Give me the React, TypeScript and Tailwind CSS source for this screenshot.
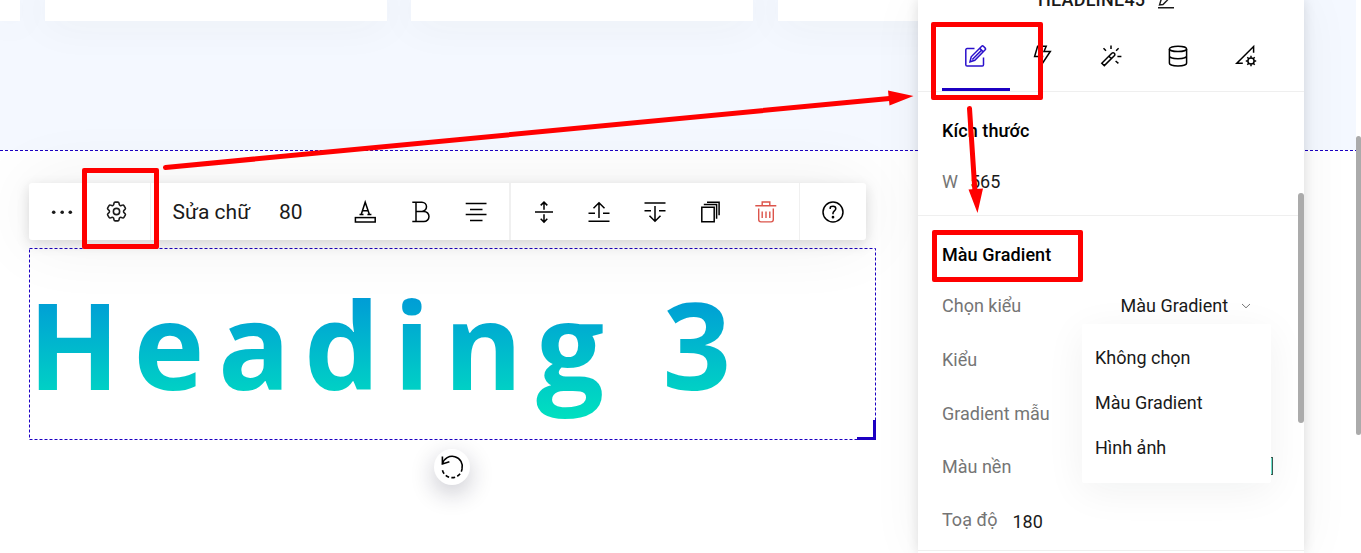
import type { ReactNode } from "react";
import { HiOutlineCog6Tooth } from "react-icons/hi2";

function Icon({ children, className = "", width = 1.5 }: { children: ReactNode; className?: string; width?: number }) {
  return (
    <svg
      viewBox="0 0 24 24"
      className={"h-6 w-6 shrink-0 overflow-visible " + className}
      fill="none"
      stroke="currentColor"
      strokeWidth={width}
    >
      {children}
    </svg>
  );
}

function Cards() {
  return (
    <div className="flex h-[21px] w-[1361px] overflow-visible">
      <div className="h-full w-5 shrink-0 bg-white shadow-[0_0_45px_rgba(60,60,20,0.07)]" />
      <div className="ml-[25px] h-full w-[342px] shrink-0 bg-white shadow-[0_0_45px_rgba(60,60,20,0.07)]" />
      <div className="ml-6 h-full w-[342px] shrink-0 bg-white shadow-[0_0_45px_rgba(60,60,20,0.07)]" />
      <div className="ml-[25px] h-full w-[342px] shrink-0 bg-white shadow-[0_0_45px_rgba(60,60,20,0.07)]" />
    </div>
  );
}

function Toolbar() {
  return (
    <div className="absolute left-[29px] top-[183px] flex h-[57px] w-[837px] items-center rounded-[3px] bg-white text-[21px] text-[#1a1a1a] shadow-[0_4px_14px_rgba(0,0,0,0.14),0_0_70px_rgba(0,0,0,0.07)]">
      <Icon className="ml-[21px]">
        <g fill="currentColor" stroke="none">
          <circle cx="3.7" cy="12.2" r="1.8" />
          <circle cx="12.2" cy="12.2" r="1.8" />
          <circle cx="20.3" cy="12.2" r="1.8" />
        </g>
      </Icon>
      <HiOutlineCog6Tooth className="ml-[30px] h-[25px] w-[25px] shrink-0" strokeWidth={1.5} />
      <div className="ml-[21px] h-full w-px shrink-0 bg-[#f0f0f0]" />
      <span className="ml-[21.5px] w-[106.5px] shrink-0 pt-[2px] whitespace-nowrap">Sửa chữ</span>
      <span className="w-[74px] shrink-0 pt-[2px]">80</span>
      <Icon className="text-black">
        <path d="M8.2 14.5 12.2 2.2 16.4 14.5M6.5 14.5h4M14.4 14.5h4M9.6 10.8h5.4" />
        <rect x="2.4" y="17.6" width="19.8" height="4.4" />
      </Icon>
      <Icon className="ml-8 text-black">
        <path d="M3.3 2.2h9.6a4.6 4.6 0 0 1 0 9.2H7M12.9 11.4h2a5.1 5.1 0 0 1 0 10.2H3.3M7 2.2v19.4" />
      </Icon>
      <Icon className="ml-[31px] text-black">
        <path d="M1.7 3.6h20.8M6 9.4h12.5M1.7 14.5h20.8M6 20.4h12.5" />
      </Icon>
      <div className="ml-[21px] h-full w-0.5 shrink-0 bg-[#f0f0f0]" />
      <Icon className="ml-[21px] text-black">
        <path d="M3 12.1h18M12 2.3v7.5M8.7 5.4 12 2.1l3.3 3.3M12 14.3v7.6M8.7 18.8l3.3 3.3 3.3-3.3" />
      </Icon>
      <Icon className="ml-[31px] text-black">
        <path d="M1.5 21.2h21M1.5 13.3H8M16 13.3h6.5M12 18V2.7M6.5 8.3 12 2.8l5.5 5.5" />
      </Icon>
      <Icon className="ml-8 text-black">
        <path d="M1.5 3h21M1.5 10.8H8M16 10.8h6.5M12 6v15.2M6.5 15.8l5.5 5.5 5.5-5.5" />
      </Icon>
      <Icon className="ml-[31px] text-black">
        <path d="M3.8 7.2h12.4v14.6H3.8zM5.8 4.6h12.8v14.2M9 2.2h12.1v13.1" />
      </Icon>
      <Icon className="ml-8 text-[#dc544b]" width={1.4}>
        <path d="M1.3 5.7h21M8.2 5.5V2h7.6v3.5M4.7 8.4v11.2c0 1.5.8 2.3 2.2 2.3h10.2c1.4 0 2.2-.8 2.2-2.3V8.4M8.2 11.5v6.6M12 11.5v6.6M15.8 11.5v6.6" />
      </Icon>
      <div className="ml-[21px] h-full w-px shrink-0 bg-[#f0f0f0]" />
      <Icon className="ml-[21px] text-black">
        <circle cx="12" cy="12" r="10" />
        <path d="M9.2 9.1V7.8c0-1 1.1-1.6 2.8-1.6s2.8 1 2.8 2.5c0 2-2.8 2.4-2.8 4.4v1.2" />
        <circle cx="12" cy="17.2" r=".6" fill="currentColor" />
      </Icon>
    </div>
  );
}

function Heading() {
  return (
    <div className="relative mt-[97px] ml-[29px] h-[192px] w-[847px]">
      <h3 className="-ml-px bg-[linear-gradient(180deg,#0081df_0%,#00ecbc_100%)] bg-clip-text font-['Open_Sans',sans-serif] text-[120px] leading-[192px] font-bold tracking-[13.6px] whitespace-nowrap text-transparent">
        Heading 3
      </h3>
      <svg className="absolute inset-0 h-full w-full" fill="none" stroke="#1c00c2">
        <rect x=".5" y=".5" width="846" height="191" strokeDasharray="3 2" />
      </svg>
      <div className="absolute right-0 bottom-0 h-5 w-[19px] border-r-[3px] border-b-[3px] border-[#1c00c2]" />
      <div className="absolute top-[201px] left-[405px] flex h-9 w-9 items-center justify-center rounded-full bg-white text-black shadow-[0_8px_24px_rgba(20,20,50,0.24)]">
        <Icon width={1.6}>
          <path d="M2.5 8.8A10 10 0 0 1 22 14" />
          <path d="M22 14A10 10 0 0 1 2.1 13" strokeDasharray="3.8 2.3" strokeDashoffset="1" />
          <path d="M2.4 1.5v7.4l7-2.2" />
        </Icon>
      </div>
    </div>
  );
}

function Tabs() {
  return (
    <div className="flex h-[83px] shrink-0 items-end border-b border-[#efefef] pl-6 text-black">
      <div className="flex h-[74px] w-[68px] border-b-[3px] border-[#1c00c2] pt-[27px] pl-[21px] text-[#2a10cc]">
        <Icon>
          <path d="M11.5 4.6H4.1c-.8 0-1.3.5-1.3 1.3v14.8c0 .8.5 1.3 1.3 1.3h15.2c.8 0 1.2-.5 1.2-1.3v-7.1" />
          <path d="m7 17.8 1.2-5L18.7 2.3c.5-.5 1.2-.5 1.7 0l1.8 1.8c.5.5.5 1.2 0 1.7L11.8 16.3zM16.8 4.4l3.4 3.4M18.7 6.1l-9.4 9.4" />
        </Icon>
      </div>
      <div className="flex h-[74px] w-[67px] pt-[27px] pl-[21px]">
        <Icon>
          <path d="M6.6 2.2h8.6L13 7.4h6.3L10 21.5l1.5-9H3.6z" />
        </Icon>
      </div>
      <div className="flex h-[74px] w-[68px] justify-center pt-[27px]">
        <Icon>
          <path d="M2.8 19.3l10-10c1.7-1.6 4.2.8 2.5 2.5l-10 9.8zM9.9 12.2l2.5 2.5M12 1.5v3.6M4.5 4.3 7 6.8M19.6 4.3l-2.500 2.500M18.400 12.400h4M16.600 17l2.800 2.400" />
        </Icon>
      </div>
      <div className="flex h-[74px] w-[67px] pt-[27px] pl-[21px]">
        <Icon>
          <ellipse cx="12" cy="4.9" rx="8.6" ry="2.7" />
          <path d="M3.4 4.9v14.4c0 1.5 3.8 2.7 8.6 2.7s8.6-1.2 8.6-2.7V4.9M3.4 12c0 1.5 3.8 2.7 8.6 2.7s8.6-1.2 8.6-2.7" />
        </Icon>
      </div>
      <div className="flex h-[74px] w-[68px] justify-center pt-[27px]">
        <Icon>
          <path d="M19.6 8.8V2.5L2.8 19.2h6" />
          <circle cx="17" cy="17" r="3.1" />
          <path d="M17 13.8v-2M17 22.2v-2M13.8 17h-2M22.2 17h-2M14.8 14.8l-1.5-1.5M20.7 20.7l-1.5-1.5M14.8 19.2l-1.5 1.5M20.7 13.3l-1.5 1.5" />
        </Icon>
      </div>
    </div>
  );
}

function Dropdown() {
  return (
    <div className="absolute top-[324px] left-[164px] flex h-[159px] w-[189px] flex-col rounded-[2px] bg-white pt-[11px] pl-[13px] text-[#1a1a1a] shadow-[0_8px_40px_rgba(0,40,30,0.06)]">
      <div className="flex h-[45px] items-center">Không chọn</div>
      <div className="flex h-[45px] items-center">Màu Gradient</div>
      <div className="flex h-[45px] items-center">Hình ảnh</div>
    </div>
  );
}

function Panel() {
  return (
    <aside className="absolute top-0 left-[918px] flex h-[553px] w-[386px] flex-col bg-white text-[18px] text-[#757575] shadow-[0_0_12px_rgba(0,0,0,0.12),0_0_50px_rgba(0,0,0,0.05)]">
      <div className="flex h-[9px] shrink-0 items-end pl-[120px] text-[#1a1a1a]">
        <span className="h-[21px] w-[119px] text-[18px] leading-[23px] font-medium tracking-[0.25px]">HEADLINE45</span>
        <svg className="h-[21px] w-[18px]" fill="none" stroke="currentColor" strokeWidth="1.4">
          <path d="M1 19.7h16M2.5 17l1.5-5 8-8 3 3-5 5.5-4 4z" />
        </svg>
      </div>
      <Tabs />
      <section className="flex h-[124px] shrink-0 flex-col border-b border-[#efefef] px-6 pt-[26px]">
        <h4 className="h-[26px] leading-[26px] font-medium tracking-[0.08px] text-black">Kích thước</h4>
        <div className="mt-[25px] flex leading-[26px]">
          <span className="w-7">W</span>
          <span className="text-[#1a1a1a]">565</span>
        </div>
      </section>
      <section className="flex h-[335px] shrink-0 flex-col border-b border-[#efefef] pt-[26px] pr-7 pl-6 leading-[26px]">
        <h4 className="font-medium tracking-[0.08px] text-black">Màu Gradient</h4>
        <div className="mt-[25px] flex items-center">
          <span className="w-[178.5px]">Chọn kiểu</span>
          <span className="w-[120px] text-[#1a1a1a]">Màu Gradient</span>
          <svg className="h-2 w-3" fill="none" stroke="#777">
            <path d="m1 2 4 3.8L9 2" />
          </svg>
        </div>
        <div className="mt-[28px]">Kiểu</div>
        <div className="mt-[28px]">Gradient mẫu</div>
        <div className="mt-[27px] flex items-center justify-between">
          <span>Màu nền</span>
          <div className="mr-[3px] mb-[2px] h-[18px] w-10 border border-[#3b5b52] bg-[#6ce6cf]" />
        </div>
        <div className="mt-[27px] flex">
          <span className="w-[70.5px]">Toạ độ</span>
          <span className="pt-[2px] text-[#1a1a1a]">180</span>
        </div>
      </section>
      <Dropdown />
      <div className="absolute top-[193px] right-0 h-[230px] w-1.5 rounded-full bg-[#ababab]" />
    </aside>
  );
}

function Annotations() {
  return (
    <>
      <div className="absolute top-[168px] left-[82px] h-[81px] w-[77px] rounded-[2px] border-5 border-[#f00]" />
      <div className="absolute top-[22px] left-[931px] h-[78px] w-[112px] rounded-[2px] border-5 border-[#f00]" />
      <div className="absolute top-[230px] left-[932px] h-[52px] w-[151px] rounded-[2px] border-5 border-[#f00]" />
      <svg className="absolute inset-0 h-[553px] w-[1361px]" fill="#f00" stroke="#f00">
        <path d="M165.500 167.500 892 98.200M969.500 108.500 975 192" strokeWidth="5" strokeLinecap="round" />
        <path d="m888 90.500 25.500 5.500-24 9.500zM968.500 189.500l14.500-1-5.500 24.500z" stroke="none" />
      </svg>
    </>
  );
}

export default function App() {
  return (
    <main className="relative h-[553px] w-[1361px] overflow-hidden bg-white font-[Roboto,sans-serif]">
      <div className="h-[150px] bg-[#f4f8ff]">
        <Cards />
      </div>
      <svg className="block h-px w-full" stroke="#1c00c2">
        <path d="M0 .5H1356" strokeDasharray="3 2" />
      </svg>
      <Heading />
      <Toolbar />
      <div className="absolute top-0 right-0 h-full w-[5px] bg-white">
        <div className="mt-[136px] h-[299px] rounded-full bg-[#ababab]" />
      </div>
      <Panel />
      <Annotations />
    </main>
  );
}
